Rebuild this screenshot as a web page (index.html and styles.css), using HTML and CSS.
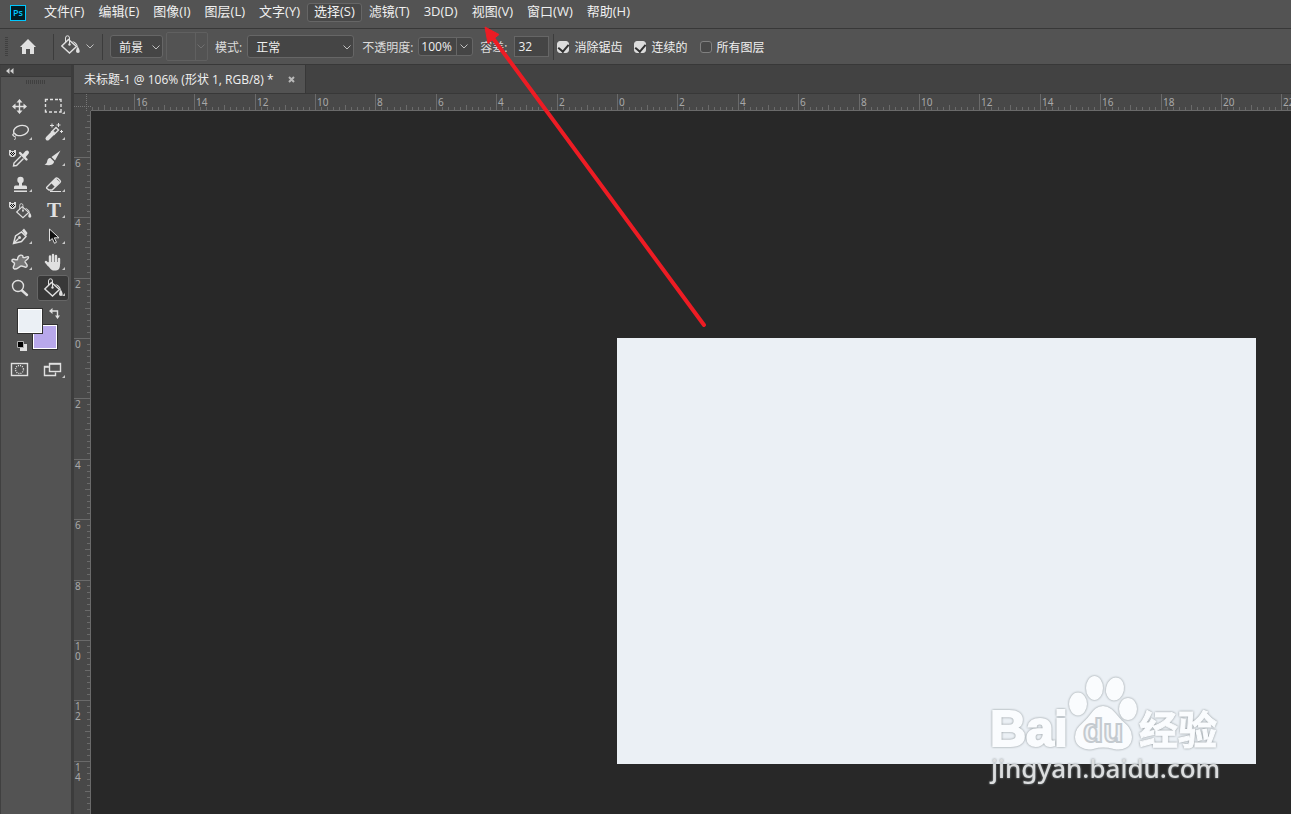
FILE: index.html
```html
<!DOCTYPE html>
<html lang="zh-CN">
<head>
  <meta charset="UTF-8">
  <meta name="viewport" content="width=device-width, initial-scale=1.0">
  <title>未标题-1 @ 106%</title>
  <link rel="stylesheet" href="styles.css">
</head>
<body>
  <div class="app">

    <nav class="menubar">
      <svg class="logo" width="16" height="16" viewBox="0 0 16 16">
        <rect x=".5" y=".5" width="15" height="15" fill="#001d26" stroke="#00c8ff"/>
        <text x="3" y="11" class="logo-text">Ps</text>
      </svg>
      <button>文件(F)</button>
      <button>编辑(E)</button>
      <button>图像(I)</button>
      <button>图层(L)</button>
      <button>文字(Y)</button>
      <button class="active">选择(S)</button>
      <button>滤镜(T)</button>
      <button>3D(D)</button>
      <button>视图(V)</button>
      <button>窗口(W)</button>
      <button>帮助(H)</button>
    </nav>

    <div class="options">
      <span class="grip"></span>
      <button class="home" aria-label="主页">
        <svg width="16" height="15" viewBox="0 0 16 15"><path d="M8 0 0 8h2v7h4v-5h4v5h4V8h2z" fill="#e0e0e0"/></svg>
      </button>
      <span class="divider"></span>
      <button class="current-tool" aria-label="油漆桶工具">
        <svg width="20" height="20" viewBox="0 0 20 20"><use href="#bucket"/></svg>
        <svg class="chev" width="8" height="5" viewBox="0 0 8 5"><path d="M.5 .5 4 4 7.5 .5"/></svg>
      </button>
      <span class="divider"></span>
      <div class="drop drop-source">
        <select aria-label="填充区域的源"><option>前景</option></select>
        <svg class="chev" width="8" height="5" viewBox="0 0 8 5"><path d="M.5 .5 4 4 7.5 .5"/></svg>
      </div>
      <button class="pattern" disabled aria-label="图案">
        <span></span>
        <svg class="chev" width="8" height="5" viewBox="0 0 8 5"><path d="M.5 .5 4 4 7.5 .5"/></svg>
      </button>
      <label class="field-label" for="mode">模式:</label>
      <div class="drop drop-mode">
        <select id="mode"><option>正常</option></select>
        <svg class="chev" width="8" height="5" viewBox="0 0 8 5"><path d="M.5 .5 4 4 7.5 .5"/></svg>
      </div>
      <label class="field-label" for="opacity">不透明度:</label>
      <div class="combo">
        <input type="text" id="opacity" value="100%">
        <button aria-label="不透明度滑块"><svg class="chev" width="8" height="5" viewBox="0 0 8 5"><path d="M.5 .5 4 4 7.5 .5"/></svg></button>
      </div>
      <label class="field-label" for="tolerance">容差:</label>
      <input class="number" type="text" id="tolerance" value="32">
      <span class="divider"></span>
      <label class="check"><input type="checkbox" checked>消除锯齿</label>
      <label class="check"><input type="checkbox" checked>连续的</label>
      <label class="check"><input type="checkbox">所有图层</label>
    </div>

    <div class="main">
      <aside class="toolbar">
        <button class="collapse" aria-label="折叠">
          <svg width="8" height="6" viewBox="0 0 8 6"><path d="M3.5 0v6L0 3zM7.5 0v6L4 3z" fill="#d0d0d0"/></svg>
        </button>
        <div class="panel-grip"></div>

        <div class="tools">
          <button aria-label="移动工具"><svg viewBox="0 0 32 26">
            <path d="M15.500 8v11M10 13.500h11" class="line"/>
            <path d="m15.500 6 3 3.500h-6zM15.500 21l3-3.500h-6zM8 13.500l3.500-3v6zM23 13.500l-3.500-3v6z" class="solid"/></svg></button>
          <button aria-label="矩形选框工具"><svg viewBox="0 0 32 26">
            <path d="M8.500 9V6.500H11M13 6.500h3M18 6.500h3M22 6.500h2V9M24 11v3M24 16v3h-2M20 19h-3M15 19h-3M10 19H8.500v-2.500M8.500 14v-3" class="line"/>
            <use href="#corner"/></svg></button>

          <button aria-label="套索工具"><svg viewBox="0 0 32 26">
            <ellipse cx="17" cy="11.500" rx="7.500" ry="5" class="line" transform="rotate(-12 17 11.500)"/>
            <path d="M10 14c-2 1-1.500 3.500.5 3.500s2.500-2.500.5-3-2.500 1.500-1 2.500 2 2 .5 4" class="line thin"/>
            <use href="#corner"/></svg></button>
          <button aria-label="魔棒工具"><svg viewBox="0 0 32 26">
            <path d="M10.500 19.500 16 14" class="line handle"/>
            <path d="m14.500 13 4.500-4.500 2.500 2.500L17 15.500z" class="line"/>
            <path d="M15 4.500v4M13 6.500h4M21.500 4v4M19.500 6h4M24.500 11v3M23 12.500h3" class="line thin"/>
            <use href="#corner"/></svg></button>

          <button aria-label="吸管工具"><svg viewBox="0 0 32 26">
            <use href="#checker"/>
            <path d="m17 11-7 7-.5 3 3-.5 7-7" class="line"/>
            <path d="m16 8 6.500 6.500" class="line thick"/>
            <path d="m18 10 3.500-4c2-1.800 4.500.7 3 2.700L21 13z" class="solid"/></svg></button>
          <button aria-label="画笔工具"><svg viewBox="0 0 32 26">
            <path d="M23.500 5.500 14.500 12l3.500 3.500zM13.500 13c-3 0-3 2.500-3.500 4-.2 1-1 2-2.500 2.500 3 1.500 9.500 1 9.500-3z" class="solid"/>
            <use href="#corner"/></svg></button>

          <button aria-label="仿制图章工具"><svg viewBox="0 0 32 26">
            <circle cx="16.500" cy="9" r="3.200" class="solid"/>
            <path d="M15 11h3v3.500h3.500q1.500 0 1.500 1.500v2H10v-2q0-1.500 1.500-1.500H15zM10 19.500h13V21H10z" class="solid"/>
            <use href="#corner"/></svg></button>
          <button aria-label="橡皮擦工具"><svg viewBox="0 0 32 26">
            <path d="m10 16 8.500-8.500q1-1 2.500 0l2 2q1 1 0 2L15 19h-3l-2-1.500q-.8-.8 0-1.500z" class="line"/>
            <path d="m14 12 5-4.500 4 3.500-5 5z" class="solid"/><path d="M13 20.500h11" class="line thin"/>
            <use href="#corner"/></svg></button>

          <button aria-label="混合器油漆桶"><svg viewBox="0 0 32 26">
            <use href="#checker"/><use href="#bucket" transform="translate(12 6) scale(.82)"/></svg></button>
          <button aria-label="横排文字工具"><svg viewBox="0 0 32 26">
            <text x="17" y="20" text-anchor="middle" class="type-icon">T</text>
            <use href="#corner"/></svg></button>

          <button aria-label="钢笔工具"><svg viewBox="0 0 32 26">
            <path d="m9.500 20.500 2-7.500 6-4 4.500 4.500-4.500 5zM9.500 20.500l5-5" class="line"/>
            <path d="m18 7.500 2-2 3.500 4.500-1.500 3z" class="solid"/>
            <circle cx="15.500" cy="14.500" r="1.500" class="solid"/>
            <use href="#corner"/></svg></button>
          <button aria-label="路径选择工具"><svg viewBox="0 0 32 26">
            <path d="M12.500 6v12l2.800-2.500 2.200 4.800 2-1-2.200-4.500H22z" fill="#111" stroke="#e0e0e0"/>
            <use href="#corner"/></svg></button>

          <button aria-label="自定形状工具"><svg viewBox="0 0 32 26">
            <path d="M13.500 10.500C14 5 19.500 5 19 8.500c1.500 1 5.500-2.500 5.500 0 0 2-4 3-3.500 4.500.5 1 3 2.500 2 4.500s-3.500-.5-5.500-.5-4 3.500-7 3c-3-1 .5-4 0-5.500S7 13 8 11c1.500-2 3.500.5 5.500-.5z" class="line blob"/>
            <use href="#corner"/></svg></button>
          <button aria-label="抓手工具"><svg viewBox="0 0 32 26">
            <path d="M11.500 16 9 13M13 14V7.500M16 13V6M19 13V7M22 14.500V10" class="line finger"/>
            <path d="M12 13h11v3q0 5-4 5.500h-3q-2 0-6.500-7l1-1z" class="solid"/>
            <use href="#corner"/></svg></button>

          <button aria-label="缩放工具"><svg viewBox="0 0 32 26">
            <circle cx="14" cy="11" r="5.500" class="line"/>
            <path d="m18 15.500 5 4.500" class="line thick"/></svg></button>
          <button class="selected" aria-label="油漆桶工具"><svg viewBox="0 0 32 26">
            <use href="#bucket" transform="translate(7 3)"/>
            <use href="#corner"/></svg></button>
        </div>

        <div class="swatches">
          <button class="swatch background" aria-label="背景色"></button>
          <button class="swatch foreground" aria-label="前景色"></button>
          <button class="swap" aria-label="切换前景色和背景色">
            <svg width="11" height="11" viewBox="0 0 11 11"><path d="M2.500 3h6v6" class="line"/><path d="M0 3l3.500-3v6zM8.500 11l2.500-3.500H6z" class="solid"/></svg>
          </button>
          <button class="reset" aria-label="默认前景色和背景色">
            <svg width="10" height="10" viewBox="0 0 10 10"><path d="M3 3h7v7H3z" fill="#e0e0e0"/><path d="M.5.5h6v6h-6z" fill="#000" stroke="#b0b0b0"/></svg>
          </button>
        </div>

        <div class="modes">
          <button aria-label="快速蒙版"><svg viewBox="0 0 32 26">
            <rect x="7.500" y="6.500" width="16" height="12" class="line"/>
            <circle cx="15.500" cy="12.500" r="4" class="line" stroke-dasharray="1 1.100"/></svg></button>
          <button aria-label="屏幕模式"><svg viewBox="0 0 32 26">
            <path d="M11.500 9.500h-4v9h11v-3" class="line"/><rect x="12.500" y="6.500" width="11" height="8" class="line"/><path d="M12 7h12M7 10h5" class="line"/>
            <use href="#corner"/></svg></button>
        </div>
      </aside>

      <section class="document">
        <div class="tabs">
          <div class="tab">
            <span>未标题-1 @ 106% (形状 1, RGB/8) *</span>
            <button aria-label="关闭"><svg width="7" height="7" viewBox="0 0 7 7"><path d="m1 1 5 5M6 1 1 6" stroke="#b8b8b8" stroke-width="2"/></svg></button>
          </div>
        </div>
        <div class="view">
          <svg class="ruler-corner" viewBox="0 0 17 17"><path d="M12.500 0v17M0 12.500h17" stroke="#777" stroke-dasharray="1 1"/></svg>
          <svg class="ruler" id="ruler-x"></svg>
          <svg class="ruler" id="ruler-y"></svg>
          <div class="canvas">
            <div class="artboard"></div>
            <svg class="watermark" width="240" height="120" viewBox="0 0 240 120">
              <g class="mark">
                <text x="5" y="76" class="wm-bai">Bai</text>
                <ellipse cx="93" cy="34" rx="8" ry="10.500"/>
                <ellipse cx="109.500" cy="18" rx="7.500" ry="11"/>
                <ellipse cx="130" cy="19" rx="8" ry="10.500" transform="rotate(12 130 19)"/>
                <ellipse cx="143" cy="39" rx="8" ry="10"/>
                <path d="M118 37c8 0 12 8 18 14 6 5 10 9 10 16 0 9-8 13-17 11-8-2-14-2-21 0-9 2-17-3-17-11s5-11 10-16c6-6 9-14 17-14z"/>
                <text x="154" y="74" class="wm-cn">经验</text>
              </g>
              <text x="98" y="72" class="wm-du">du</text>
              <text x="6" y="108" class="wm-url">jingyan.baidu.com</text>
            </svg>
          </div>
        </div>
      </section>
    </div>

    <svg class="pointer" width="230" height="310" viewBox="0 0 230 310">
      <path d="M12 17 224 305" stroke="#ed1c24" stroke-width="4" stroke-linecap="round"/>
      <path d="m5 7 14 7.500-5 4-6 5z" fill="#ed1c24" stroke="#ed1c24"/>
    </svg>
  </div>

  <!-- shared icon parts -->
  <svg class="defs" width="0" height="0">
    <symbol id="corner" viewBox="0 0 32 26"><path d="M28 18v3h-3z" fill="#c8c8c8"/></symbol>
    <g id="bucket">
      <path d="m7.500 4.500 8 7-7 6.500L.8 11z" class="line"/>
      <path d="M4.500 8V3q0-2.200 2-2.200t2 2.200v6" class="line thin"/>
      <circle cx="8.500" cy="9.500" r="1.200" class="solid"/>
      <path d="M11 6q5 1 6 6c2 3 2.500 6 0 6s-2.500-3-.5-6Q14 8 11 6z" class="solid"/>
    </g>
    <g id="checker">
      <path d="M5 5h2v1h3V5h2v5l-2 2H7l-2-2z" fill="#d8d8d8"/>
      <path d="M7 7h1v1H7zM9 7h1v1H9zM6 8h1v1H6zM8 8h1v1H8zM10 8h1v1h-1zM7 9h1v1H7zM9 9h1v1H9zM8 10h1v1H8z" fill="#111"/>
    </g>
  </svg>

  <script src="rulers.js"></script>
</body>
</html>
```
FILE: styles.css
```css
* {
  box-sizing: border-box;
}

body {
  margin: 0;
  font-family: "Open Sans", "Noto Sans CJK SC", sans-serif;
  font-size: 12px;
  color: #f0f0f0;
  background-color: #282828;
}

button,
input,
select {
  margin: 0;
  padding: 0;
  border: 0;
  background: none;
  color: inherit;
  font: inherit;
}

svg {
  display: block;
  flex-shrink: 0;
}

.defs {
  position: absolute;
}

/* icon strokes */
.line {
  fill: none;
  stroke: #e0e0e0;
  stroke-width: 1.4;
}

.thin {
  stroke-width: 1;
}

.thick,
.finger {
  stroke-width: 2.4;
  stroke-linecap: round;
}

.handle {
  stroke-width: 4;
  stroke-linecap: round;
}

.blob {
  fill: #777;
}

.solid {
  fill: #e0e0e0;
}

.type-icon {
  font: bold 21px "Liberation Serif", serif;
  fill: #e0e0e0;
}

.app {
  position: relative;
  display: flex;
  flex-direction: column;
  height: 100vh;
  overflow: hidden;
}

/* menu */
.menubar {
  display: flex;
  align-items: center;
  height: 29px;
  padding: 0 0 3px 10px;
  background-color: #535353;
  border-bottom: 1px solid #383838;
  font-size: 13px;
}

.logo {
  margin-right: 11px;
}

.logo-text {
  font-size: 9px;
  font-weight: 600;
  fill: #00c8ff;
}

.menubar button {
  height: 19px;
  padding: 0 6px 2px;
  border: 1px solid transparent;
  border-radius: 3px;
  line-height: 15px;
  white-space: nowrap;
}

.menubar .active {
  background-color: #484848;
  border-color: #666;
}

/* options */
.options {
  display: flex;
  align-items: center;
  height: 36px;
  padding-left: 5px;
  background-color: #535353;
  border-bottom: 1px solid #383838;
  white-space: nowrap;
}

.grip {
  width: 3px;
  height: 20px;
  background: repeating-linear-gradient(#404040 0 1px, #535353 1px 2px);
}

.divider {
  width: 1px;
  height: 26px;
  background-color: #3c3c3c;
}

.chev {
  fill: none;
  stroke: #c0c0c0;
}

.home {
  margin: 0 17px 0 12px;
}

.current-tool {
  display: flex;
  align-items: center;
  gap: 5px;
  margin: 0 8px 0 7px;
}

.current-tool > svg:first-child {
  margin-bottom: 4px;
}

.drop {
  position: relative;
}

.drop select {
  width: 100%;
  height: 23px;
  padding: 1px 8px 0;
  appearance: none;
  background-color: #454545;
  border: 1px solid #666;
  border-radius: 3px;
}

.drop .chev {
  position: absolute;
  right: 3px;
  top: 10px;
}

.drop-source {
  width: 53px;
  margin-right: 3px;
  margin-left: 7px;
}

.drop-mode {
  width: 107px;
  margin-right: 8px;
}

.pattern {
  display: flex;
  align-items: center;
  width: 42px;
  height: 29px;
  margin-right: 7px;
  border: 1px solid #606060;
  border-radius: 2px;
}

.pattern span {
  width: 29px;
  height: 27px;
  margin-right: 1px;
  border-right: 1px solid #606060;
}

.pattern .chev {
  stroke: #707070;
}

.field-label {
  margin-right: 5px;
  color: #dcdcdc;
}

.combo {
  display: flex;
  height: 19px;
  margin-right: 7px;
  background-color: #454545;
  border: 1px solid #666;
  border-radius: 3px;
}

.combo input {
  width: 38px;
  padding-left: 2px;
  border-right: 1px solid #666;
}

.combo button {
  width: 15px;
  padding-left: 3px;
}

.number {
  width: 35px;
  height: 21px;
  padding-left: 3px;
  margin-right: 4px;
  margin-left: 2px;
  background-color: #454545;
  border: 1px solid #666;
}

.check {
  display: flex;
  align-items: center;
  gap: 5px;
  margin-right: 9px;
}

.check input {
  width: 12px;
  height: 12px;
  margin-left: 3px;
  appearance: none;
  background-color: #484848;
  border: 1px solid #808080;
  border-radius: 3px;
}

.check input:checked {
  background-color: #dcdcdc;
  border-color: #dcdcdc;
}

.check input:checked::before {
  content: "";
  display: block;
  width: 5px;
  height: 8px;
  margin: 0 auto;
  border: solid #303030;
  border-width: 0 2px 2px 0;
  transform: rotate(40deg);
}

/* main area */
.main {
  display: flex;
  flex: 1;
  min-height: 0;
}

.toolbar {
  display: flex;
  flex-direction: column;
  width: 74px;
  flex-shrink: 0;
  background-color: #535353;
  border-left: 1px solid #404040;
  border-right: 3px solid #3c3c3c;
}

.collapse {
  height: 12px;
  padding-left: 5px;
  background-color: #424242;
  border-bottom: 1px solid #383838;
}

.panel-grip {
  width: 20px;
  height: 4px;
  margin: 3px 0 9px 25px;
  background: repeating-linear-gradient(90deg, #404040 0 1px, #535353 1px 2px);
}

.tools,
.modes {
  display: grid;
  grid-template-columns: 32px 32px;
  grid-auto-rows: 26px;
  column-gap: 1px;
  padding-left: 3px;
}

.tools svg,
.modes svg {
  width: 32px;
  height: 26px;
}

.tools .selected {
  background-color: #383838;
  border-radius: 3px;
  box-shadow: inset 0 0 0 1px #666;
}

.swatches {
  position: relative;
  height: 56px;
}

.swatches button {
  position: absolute;
}

.swatch {
  width: 26px;
  height: 26px;
  border: 1px solid #303030;
  box-shadow: inset 0 0 0 1px #fff;
}

.foreground {
  left: 16px;
  top: 7px;
  background-color: #ebf0f5;
}

.background {
  left: 31px;
  top: 23px;
  background-color: #b8a8eb;
}

.swap {
  left: 48px;
  top: 7px;
}

.reset {
  left: 16px;
  top: 40px;
}

/* document */
.document {
  display: flex;
  flex: 1;
  flex-direction: column;
  min-width: 0;
}

.tabs {
  display: flex;
  height: 29px;
  background-color: #424242;
  border-bottom: 1px solid #383838;
}

.tab {
  display: flex;
  align-items: center;
  gap: 14px;
  padding: 0 10px;
  background-color: #535353;
  border-right: 1px solid #383838;
  white-space: nowrap;
}

.view {
  display: grid;
  flex: 1;
  grid-template-columns: 17px 1fr;
  grid-template-rows: 17px 1fr;
  min-height: 0;
}

.ruler-corner,
.ruler {
  width: 100%;
  height: 100%;
  min-width: 0;
  min-height: 0;
  overflow: hidden;
  background-color: #484848;
}

#ruler-x {
  border-bottom: 1px solid #6a6a6a;
}

#ruler-y {
  border-right: 1px solid #6a6a6a;
}

.ruler path {
  fill: none;
  stroke: #6a6a6a;
}

.ruler text {
  font-family: "Noto Sans", sans-serif;
  font-size: 10px;
  fill: #a8a8a8;
}

.canvas {
  position: relative;
  overflow: hidden;
  background-color: #282828;
}

.artboard {
  position: absolute;
  left: 526px;
  top: 227px;
  width: 639px;
  height: 426px;
  background-color: #ebf0f5;
}

.watermark {
  position: absolute;
  left: 894px;
  top: 559px;
}

.mark {
  fill: #fafcfe;
  stroke: #fafcfe;
  stroke-width: 2;
  filter: drop-shadow(0 0 1px #889094);
}

.wm-bai {
  font: bold 50px "Liberation Sans", sans-serif;
}

.wm-du {
  font: bold 33px "Liberation Sans", sans-serif;
  fill: #f2f5f8;
  stroke: #c4cacf;
  stroke-width: 2;
}

.wm-cn {
  font: bold 39px "Noto Sans CJK SC", sans-serif;
  stroke-width: 1;
}

.wm-url {
  font: 500 26px "Noto Sans", sans-serif;
  fill: #dcdedf;
  filter: drop-shadow(0 0 1px #889094);
}

.pointer {
  position: absolute;
  left: 480px;
  top: 20px;
  pointer-events: none;
}
```
FILE: rulers.js
```js
// ten small ticks per labelled step
var STEP = 60.4;
var SVG = 'http://www.w3.org/2000/svg';

function addText(svg, x, y, str) {
  var t = document.createElementNS(SVG, 'text');
  t.setAttribute('x', x);
  t.setAttribute('y', y);
  t.textContent = str;
  svg.appendChild(t);
}

function drawRuler(id, origin, vertical) {
  var svg = document.getElementById(id);
  var length = vertical ? svg.clientHeight : svg.clientWidth;
  var d = '';
  svg.innerHTML = '';

  for (var i = Math.ceil(-origin / STEP * 10); i * STEP / 10 + origin < length; i++) {
    var pos = Math.round(origin + i * STEP / 10);
    var major = i % 10 === 0;
    var start = major ? 0 : (i % 5 === 0 ? 11 : 13);
    d += vertical ? 'M' + start + ' ' + (pos + 0.5) + 'H17' : 'M' + (pos + 0.5) + ' ' + start + 'V17';

    if (major) {
      var label = String(Math.abs(i / 5));
      if (vertical) {
        for (var n = 0; n < label.length; n++) {
          addText(svg, 1, pos + 10 + n * 10, label[n]);
        }
      } else {
        addText(svg, pos + 2, 12, label);
      }
    }
  }

  var path = document.createElementNS(SVG, 'path');
  path.setAttribute('d', d);
  svg.appendChild(path);
}

function drawRulers() {
  drawRuler('ruler-x', 526, false);
  drawRuler('ruler-y', 227, true);
}

drawRulers();
window.addEventListener('resize', drawRulers);
```
